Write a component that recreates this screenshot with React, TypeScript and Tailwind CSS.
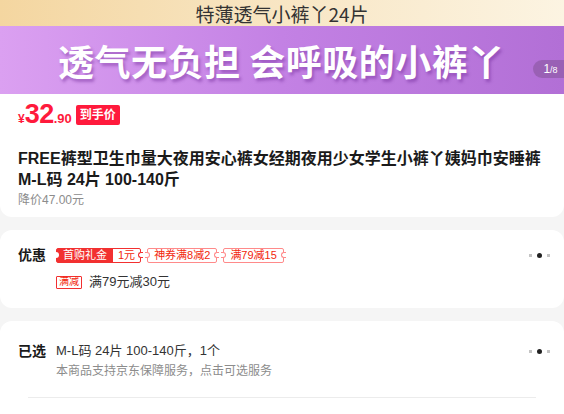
import React from 'react';

const font = "font-['Liberation_Sans','Noto_Sans_CJK_SC',sans-serif]";

function Notch({ side, color = 'border-[#ff8a8a]' }: { side: 'left' | 'right'; color?: string }) {
  return (
    <span
      className={`absolute top-1/2 -translate-y-1/2 w-[5px] h-[6px] bg-white border ${color} ${
        side === 'left' ? '-left-[3px] rounded-r-full border-l-0' : '-right-[3px] rounded-l-full border-r-0'
      }`}
    />
  );
}

function Ticket({ children }: { children: React.ReactNode }) {
  return (
    <span className="relative flex items-center h-[15px] px-[6px] border border-[#ff8a8a] rounded-[2px] text-[11px] leading-none text-[#f2270c]">
      <Notch side="left" />
      {children}
      <Notch side="right" />
    </span>
  );
}

function Dots() {
  return (
    <div className="flex items-center gap-[5px]">
      <span className="w-[3px] h-[3px] bg-[#c4c4c4]" />
      <span className="w-[5px] h-[5px] rounded-full bg-[#222]" />
      <span className="w-[3px] h-[3px] bg-[#c4c4c4]" />
    </div>
  );
}

export default function App() {
  return (
    <div className={`w-[564px] h-[414px] overflow-hidden bg-[#f5f5f5] ${font}`}>
      {/* top strip */}
      <div className="h-[26px] flex items-center justify-center bg-gradient-to-r from-[#f4d6a0] via-[#f8e6c4] to-[#fcf4e2]">
        <span className="text-[19px] leading-none text-[#333] font-['Noto_Sans_CJK_SC',sans-serif]">特薄透气小裤丫24片</span>
      </div>

      {/* purple banner */}
      <div className="relative h-[68px] flex items-center bg-gradient-to-r from-[#dba0f1] via-[#c381e4] to-[#b26fd6]">
        <span className="pl-[58px] text-[36px] leading-none font-bold text-white tracking-[0.5px] font-['Noto_Sans_CJK_SC',sans-serif] [text-shadow:2px_3px_3px_rgba(110,40,150,0.45)]">
          透气无负担 会呼吸的小裤丫
        </span>
        <div className="absolute right-0 top-[34px] h-[18px] w-[31px] rounded-l-full bg-[#8e5aa6]/70 flex items-center justify-center pl-[4px]">
          <span className="text-[12px] text-white leading-none">1</span>
          <span className="text-[9px] text-white leading-none mt-[2px]">/8</span>
        </div>
      </div>

      {/* price card */}
      <div className="bg-white rounded-b-[12px] px-[18px] pt-[11px] pb-[9px]">
        <div className="flex items-center h-[20px]">
          <div className="flex items-baseline text-[#ff1a3c] font-bold">
            <span className="text-[12px]">¥</span>
            <span className="text-[27px] leading-none tracking-[-0.5px]">32</span>
            <span className="text-[13px]">.90</span>
          </div>
          <span className="ml-[4px] h-[20px] px-[4px] flex items-center rounded-[2px] bg-[#ff1a3c] text-white text-[12px] font-bold">到手价</span>
        </div>
        <div className="mt-[23px] text-[16px] leading-[21px] font-bold text-[#1a1a1a]">
          FREE裤型卫生巾量大夜用安心裤女经期夜用少女学生小裤丫姨妈巾安睡裤 M-L码 24片 100-140斤
        </div>
        <div className="mt-[2px] text-[12px] leading-[16px] text-[#8c8c8c]">降价47.00元</div>
      </div>

      {/* discount card */}
      <div className="mt-[13px] bg-white rounded-[12px] pl-[18px] pr-[14px] pt-[17px] pb-[18px]">
        <div className="flex items-center h-[16px]">
          <span className="w-[38px] text-[14px] font-bold text-[#1a1a1a]">优惠</span>
          <div className="flex items-center gap-[6px]">
            <span className="relative flex items-center h-[15px] border border-[#f23030] rounded-[2px] text-[11px] leading-none">
              <span className="absolute -left-[3px] top-1/2 -translate-y-1/2 w-[5px] h-[6px] bg-white rounded-r-full" />
              <span className="h-full flex items-center px-[6px] bg-[#f23030] text-white">首购礼金</span>
              <span className="h-full flex items-center px-[5px] text-[#f2270c]">1元</span>
              <Notch side="right" color="border-[#f23030]" />
            </span>
            <Ticket>神券满8减2</Ticket>
            <Ticket>满79减15</Ticket>
          </div>
          <div className="ml-auto">
            <Dots />
          </div>
        </div>
        <div className="flex items-center h-[16px] mt-[11px] pl-[38px]">
          <span className="h-[13px] px-[2px] flex items-center border border-[#f23030] rounded-[1px] text-[10px] leading-none text-[#f2270c]">满减</span>
          <span className="ml-[7px] text-[13px] text-[#333]">满79元减30元</span>
        </div>
      </div>

      {/* selected card */}
      <div className="mt-[13px] bg-white rounded-t-[12px] h-[100px] pt-[22px]">
        <div className="flex items-center pl-[18px] pr-[14px] h-[16px]">
          <span className="w-[38px] text-[14px] font-bold text-[#1a1a1a]">已选</span>
          <span className="text-[13px] text-[#333]">M-L码 24片 100-140斤，1个</span>
          <div className="ml-auto">
            <Dots />
          </div>
        </div>
        <div className="pl-[56px] mt-[4px] text-[12px] leading-[16px] text-[#8c8c8c]">本商品支持京东保障服务，点击可选服务</div>
        <div className="mx-[28px] mt-[18px] h-px bg-[#ececec]" />
      </div>
    </div>
  );
}
